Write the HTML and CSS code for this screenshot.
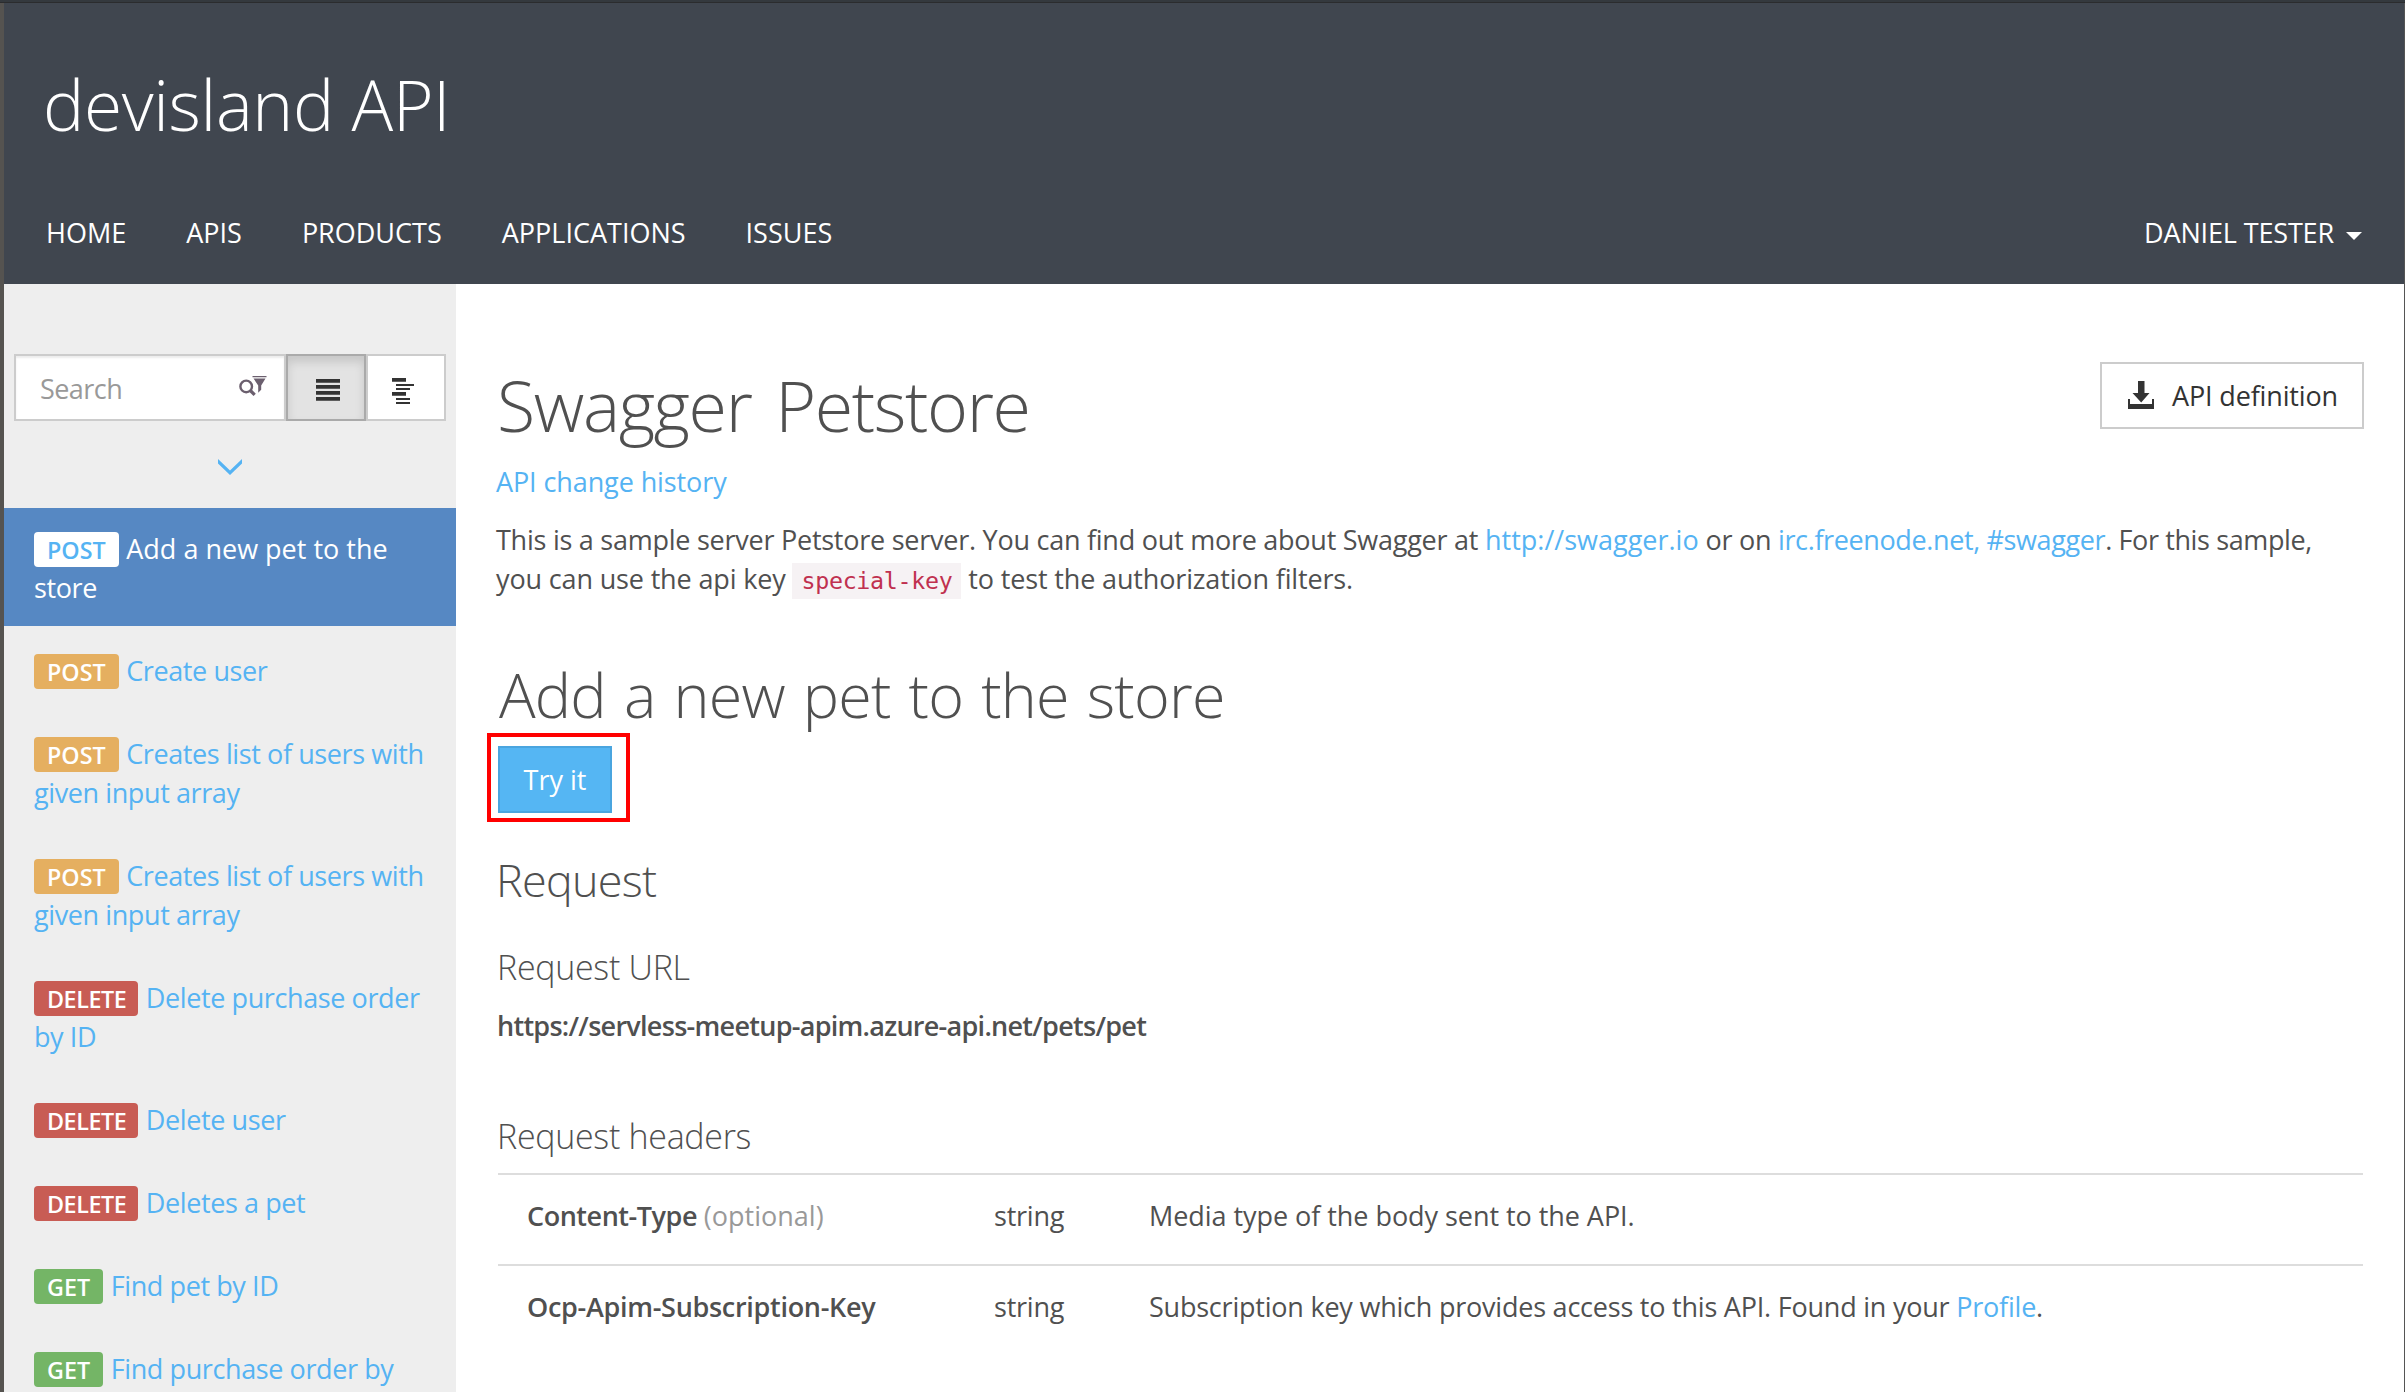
FILE: index.html
```html
<!DOCTYPE html>
<html lang="en">
<head>
<meta charset="utf-8">
<title>devisland API</title>
<link rel="stylesheet" href="styles.css">
</head>
<body>
<div class="topline"></div>
<div class="window">
  <header class="header">
    <div class="brand">devisland API</div>
    <nav class="nav">
      <a>HOME</a><a>APIS</a><a>PRODUCTS</a><a>APPLICATIONS</a><a>ISSUES</a>
      <a class="user">DANIEL TESTER<span class="caret"></span></a>
    </nav>
  </header>
  <div class="content">
    <aside class="sidebar">
      <div class="toolbar">
        <div class="search"><span>Search</span>
          <svg class="filter-icon" width="30" height="22" viewBox="0 0 30 22"><circle cx="8.2" cy="11.4" r="5.8" fill="none" stroke="#6b5f6e" stroke-width="2.4"/><path d="M12.3 15.5l4.400 4.400" stroke="#6b5f6e" stroke-width="3.2"/><path d="M14.500 1h14v1.300h-14zM15.500 3.400h12l-4.300 7v4.400l-3 3V10.400z" fill="#6b5f6e"/></svg>
        </div>
        <div class="toggle active"><svg width="24" height="26" viewBox="0 0 24 26"><path d="M0 1h24v3.700H0zM0 7h24v3.700H0zM0 13h24v3.700H0zM0 19h24v3.700H0z" fill="#333"/></svg></div>
        <div class="toggle"><svg width="24" height="26" viewBox="0 0 24 26"><path d="M0 0h14v3.700H0zM4 6h18v2H4zM4 10h14v2H4zM0 14h14v3.700H0zM4 20h14v2H4zM4 24h14v2H4z" fill="#333"/></svg></div>
      </div>
      <svg class="expand" width="26" height="18" viewBox="0 0 26 18"><path d="M1 1v4.400L13 17 25 5.400V1L13 12.400z" fill="#55b3f3"/></svg>
      <ul class="operations">
        <li class="selected"><span class="badge">POST</span> <span class="wide">Add a new pet to the</span> store</li>
        <li><span class="badge post">POST</span> Create user</li>
        <li><span class="badge post">POST</span> Creates list of users with given input array</li>
        <li><span class="badge post">POST</span> Creates list of users with given input array</li>
        <li><span class="badge delete">DELETE</span> Delete purchase order by ID</li>
        <li><span class="badge delete">DELETE</span> Delete user</li>
        <li><span class="badge delete">DELETE</span> Deletes a pet</li>
        <li><span class="badge get">GET</span> Find pet by ID</li>
        <li><span class="badge get">GET</span> Find purchase order by</li>
      </ul>
    </aside>
    <main class="main">
      <div class="title-row">
        <h1>Swagger Petstore</h1>
        <a class="definition"><svg width="26" height="28" viewBox="0 0 26 28"><path d="M10 0h6.500v12h5L13.200 21.500 4.500 12H10z" fill="#333"/><path d="M0 18h2v5h22v-5h2v10H0z" fill="#333"/></svg>API definition</a>
      </div>
      <a class="history">API change history</a>
      <p class="description">This is a sample server Petstore server. You can find out more about Swagger at <a class="url">http://swagger.io</a> or on <span class="tight"><a>irc.freenode.net, #swagger</a>. For this sample,</span><br><span class="loose">you can use the api key <code>special-key</code> to test the authorization filters.</span></p>
      <h2>Add a new pet to the store</h2>
      <div class="action"><a class="try">Try it</a></div>
      <h3>Request</h3>
      <h4>Request URL</h4>
      <div class="request-url">https://servless-meetup-apim.azure-api.net/pets/pet</div>
      <h4 class="headers">Request headers</h4>
      <div class="params">
        <div class="param"><div class="name"><b>Content-Type</b> <span class="optional">(optional)</span></div><div>string</div><div class="loose">Media type of the body sent to the API.</div></div>
        <div class="param"><div class="name"><b class="key">Ocp-Apim-Subscription-Key</b></div><div>string</div><div>Subscription key which provides access to this API. Found in your <a>Profile</a>.</div></div>
      </div>
    </main>
  </div>
</div>
</body>
</html>
```
FILE: styles.css
```css
*, *::before { box-sizing: border-box; }
html, body { height: 100%; }
body {
  margin: 0;
  overflow: hidden;
  display: flex;
  flex-direction: column;
  font: 400 27px/39px "Open Sans", "Noto Sans", sans-serif;
  letter-spacing: -0.25px;
  color: #505050;
  background: #fff;
}
h1, h2, h3, h4, p, ul { margin: 0; padding: 0; }
h1, h2, h3, h4 { font-weight: 300; white-space: nowrap; }
a { color: #55b3f3; }
svg { display: block; flex: none; }

.topline { flex: none; height: 3px; background: #34393e; border-bottom: 1px solid #2b2c2e; }
.window {
  flex: 1;
  min-height: 0;
  display: flex;
  flex-direction: column;
  border-left: 4px solid #555350;
  border-right: 1px solid #555;
}

/* Header */
.header { flex: none; height: 281px; padding: 61px 42px 0 39px; background: #40464f; }
.brand { font-size: 69.4px; font-weight: 300; line-height: 80px; letter-spacing: -0.35px; color: #fff; }
.nav { display: flex; gap: 60px; margin: 69px 0 0 3px; letter-spacing: 0; }
.nav a { color: #fff; white-space: nowrap; }
.nav .user { display: flex; align-items: center; gap: 12px; margin-left: auto; letter-spacing: -0.15px; }
.caret { margin-top: 6px; border: 8px solid transparent; border-top-color: #fff; border-bottom: 0; }

.content { flex: 1; min-height: 0; display: flex; }

/* Sidebar */
.sidebar { flex: none; width: 452px; overflow: hidden; background: #eee; }
.toolbar { display: flex; height: 67px; margin: 70px 10px 0; }
.search {
  display: flex;
  width: 272px;
  padding: 13px 17px 0 24px;
  justify-content: space-between;
  background: #fff;
  border: 2px solid #ccc;
  box-shadow: inset 0 2px 2px rgba(0, 0, 0, .075);
  letter-spacing: -0.55px;
  color: #999;
}
.filter-icon { margin-top: 6px; margin-right: -1px; }
.toggle { width: 80px; padding: 22px 0 0 24px; background: #fff; border: 2px solid #ccc; }
.toggle.active { padding-left: 28px; background: #e3e3e3; border-color: #aaa; box-shadow: inset 0 6px 10px rgba(0, 0, 0, .125); }
.expand { margin: 37px 0 0 213px; }
.operations { margin-top: 32px; list-style: none; letter-spacing: -0.4px; color: #55b3f3; }
.operations li { margin-bottom: 4px; padding: 21px 28px 19px 30px; }
.operations .selected { background: #5688c3; color: #fff; }
.operations .wide { letter-spacing: 0; }
.badge {
  display: inline-block;
  margin-right: 1px;
  padding: 2px 13px 1px;
  border-radius: 4px;
  background: #fff;
  color: #55b3f3;
  font-size: 23.3px;
  font-weight: 600;
  line-height: 32px;
  letter-spacing: 0;
}
.post, .delete, .get { color: #fff; }
.post { background: #e5af60; }
.delete { background: #c85c54; padding-right: 12px; letter-spacing: -0.45px; }
.get { background: #74b566; }

/* Main column */
.main { flex: 1; min-width: 0; padding: 78px 40px 0; }
.title-row { display: flex; justify-content: space-between; height: 83px; }
h1 { margin: 3px 0 0 1px; font-size: 70px; line-height: 80px; letter-spacing: -1.4px; word-spacing: 7px; }
.definition {
  display: flex;
  width: 264px;
  height: 67px;
  padding: 12px 0 0 26px;
  gap: 18px;
  border: 2px solid #ccc;
  color: #333;
  letter-spacing: -0.15px;
  white-space: nowrap;
}
.definition svg { margin-top: 5px; }
.history { display: block; margin-top: 17px; letter-spacing: -0.1px; }
.description { margin-top: 19px; white-space: nowrap; }
.description .url { letter-spacing: 0; }
.tight { letter-spacing: -0.38px; }
.loose { letter-spacing: -0.15px; }
code {
  padding: 4px 9px 5px;
  background: #f6f2f4;
  color: #c0304f;
  font: 23.300px/1 "DejaVu Sans Mono", monospace;
  letter-spacing: -0.3px;
}
h2 { margin: 62px 0 0 3px; font-size: 61px; line-height: 70px; letter-spacing: -0.8px; word-spacing: 3px; }
.action { position: relative; width: 114px; height: 67px; margin: 16px 0 0 2px; }
.action::before { content: ""; position: absolute; left: -11px; top: -13px; width: 143px; height: 89px; border: 4px solid #f00; }
.try { display: block; height: 67px; padding-top: 12px; background: #55b6f3; border: 2px solid #4aa5df; color: #fff; text-align: center; letter-spacing: 0; }
h3 { margin-top: 42px; font-size: 45px; line-height: 50px; letter-spacing: -0.75px; }
h4 { margin: 42px 0 0 1px; font-size: 34px; line-height: 40px; letter-spacing: -0.3px; }
.request-url { margin: 19px 0 0 1px; font-weight: 600; letter-spacing: -0.72px; }
.headers { margin-top: 71px; }
.params { margin: 17px 1px 0 2px; }
.param { display: grid; grid-template-columns: 496px 155px 1fr; padding: 21px 0 29px; border-top: 2px solid #ddd; white-space: nowrap; letter-spacing: -0.22px; }
.param .loose { letter-spacing: -0.05px; }
.name { padding-left: 29px; }
.param b { font-weight: 600; letter-spacing: -0.46px; }
.param .key { letter-spacing: -0.3px; }
.optional { color: #999; letter-spacing: 0; }
```
